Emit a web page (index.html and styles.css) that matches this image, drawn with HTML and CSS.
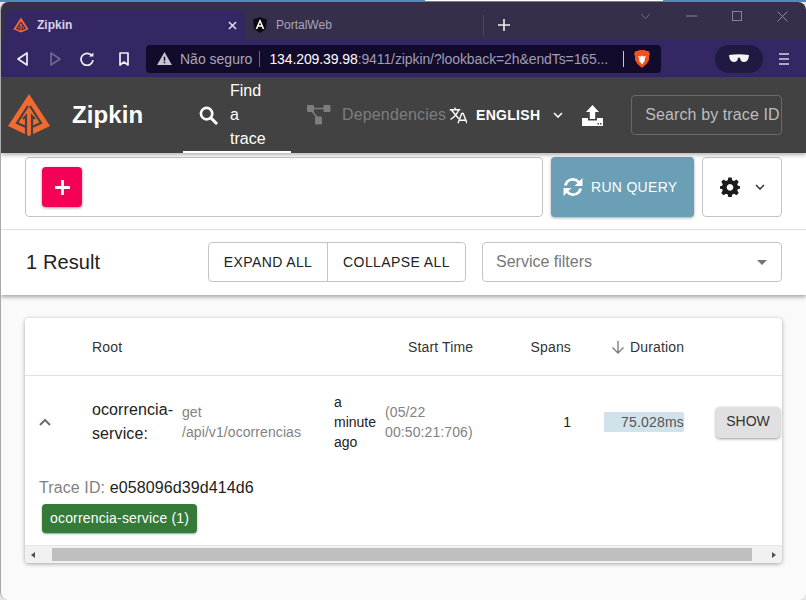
FILE: index.html
```html
<!DOCTYPE html>
<html lang="en">
<head>
<meta charset="UTF-8">
<meta name="viewport" content="width=device-width, initial-scale=1.0">
<title>Zipkin</title>
<link rel="stylesheet" href="styles.css">
</head>
<body>
<div class="desktop">
  <div class="desktop-top"><div class="other-window"></div></div>
  <div class="window">

    <div class="tabstrip">
      <div class="tab tab-active">
        <svg class="favicon" viewBox="0 0 42 42"><path d="M21 1 L41 32 L21 41 L1 32 Z" fill="#f26a30"/><path d="M21 13 L10 30 L18 33 V22 M21 13 L32 30 L24 33 V22" fill="none" stroke="#352763" stroke-width="3"/></svg>
        <span class="tab-title">Zipkin</span>
        <svg class="tab-close" viewBox="0 0 10 10"><path d="M1 1 L9 9 M9 1 L1 9" stroke="#e6e4ee" stroke-width="1.6"/></svg>
      </div>
      <div class="tab tab-other">
        <svg class="favicon" viewBox="0 0 16 16"><path d="M8 0 L15 2.6 L13.9 12 L8 16 L2.1 12 L1 2.6 Z" fill="#0c0c10"/><path d="M8 2 L12.4 12 H10.7 L9.8 9.7 H6.2 L5.3 12 H3.6 Z M8 5.4 L6.8 8.3 H9.2 Z" fill="#fff" fill-rule="evenodd"/></svg>
        <span class="tab-title tab-title-dim">PortalWeb</span>
      </div>
      <div class="tab-sep"></div>
      <svg class="new-tab" viewBox="0 0 12 12"><path d="M6 0 V12 M0 6 H12" stroke="#f0eff5" stroke-width="1.6"/></svg>
      <div class="win-controls">
        <svg viewBox="0 0 12 8" class="wc wc-chev"><path d="M1 1 L6 6.5 L11 1" fill="none" stroke="#77728c"/></svg>
        <svg viewBox="0 0 11 2" class="wc wc-min"><path d="M0 1 H11" stroke="#8d89a0"/></svg>
        <svg viewBox="0 0 11 11" class="wc wc-max"><rect x="0.5" y="0.5" width="10" height="10" fill="none" stroke="#8d89a0"/></svg>
        <svg viewBox="0 0 11 11" class="wc wc-x"><path d="M0.5 0.5 L10.5 10.5 M10.5 0.5 L0.5 10.5" stroke="#8d89a0"/></svg>
      </div>
    </div>

    <div class="toolbar">
      <svg class="nav-back" viewBox="0 0 11 14"><path d="M10 1 V13 L1 7 Z" fill="none" stroke="#f0eff5" stroke-width="1.7" stroke-linejoin="round"/></svg>
      <svg class="nav-forward" viewBox="0 0 11 14"><path d="M1 1 V13 L10 7 Z" fill="none" stroke="#6f6a8c" stroke-width="1.7" stroke-linejoin="round"/></svg>
      <svg class="nav-reload" viewBox="0 0 14 14"><path d="M12 4 A6 6 0 1 0 13 8" fill="none" stroke="#f0eff5" stroke-width="1.7"/><path d="M9 4.5 H13.4 V0.5 Z" fill="#f0eff5"/></svg>
      <svg class="nav-bookmark" viewBox="0 0 10 14"><path d="M1 1 H9 V13 L5 10 L1 13 Z" fill="none" stroke="#f0eff5" stroke-width="1.7" stroke-linejoin="round"/></svg>
      <div class="omnibox">
        <svg class="warn" viewBox="0 0 16 14"><path d="M8 0 L16 14 H0 Z" fill="#c6c4d0"/><path d="M7.2 5 H8.8 V9.5 H7.2 Z M7.2 10.5 H8.8 V12 H7.2 Z" fill="#120b2c"/></svg>
        <span class="insecure">Não seguro</span>
        <span class="omni-sep"></span>
        <span class="url"><b>134.209.39.98</b>:9411/zipkin/?lookback=2h&amp;endTs=165...</span>
        <span class="omni-sep omni-sep-light"></span>
        <svg class="brave" viewBox="0 0 16 18"><path d="M3.5 1 L5.5 0 H10.5 L12.5 1 L14.5 1 L16 4 L15 6 L15 10 L12.5 14 L8 18 L3.5 14 L1 10 L1 6 L0 4 L1.5 1 Z" fill="#f1501f"/><path d="M4 6 L6.5 6.5 L8 5.5 L9.5 6.5 L12 6 L10.5 9 L11 10.5 L8 14.5 L5 10.5 L5.5 9 Z" fill="#fff"/></svg>
      </div>
      <div class="incognito">
        <svg viewBox="0 0 20 9"><path d="M0 1 Q10 -0.5 20 1 L19.5 4 Q18.5 8 15 8 Q11.5 8 11 4 Q10 3 9 4 Q8.5 8 5 8 Q1.5 8 0.5 4 Z" fill="#f4f4f4"/></svg>
      </div>
      <svg class="menu-icon" viewBox="0 0 10 12"><path d="M0 1 H10 M0 6 H10 M0 11 H10" stroke="#d5d3e0" stroke-width="1.5"/></svg>
    </div>

    <header class="appbar">
      <svg class="logo" viewBox="0 0 42 42"><path d="M21 0 L42 32 L21 42 L0 32 Z" fill="#f26a30"/><path d="M20 12 L9 29 L18 33 V22 L15 25 M22 12 L33 29 L24 33 V22 L27 25 M18 33 V42 M24 33 V42" fill="none" stroke="#424242" stroke-width="2.2"/></svg>
      <span class="brand">Zipkin</span>
      <a class="navtab navtab-on">
        <svg viewBox="0 0 20 20"><circle cx="8" cy="8" r="6" fill="none" stroke="#fff" stroke-width="2.8"/><path d="M12.5 12.5 L19 19" stroke="#fff" stroke-width="3"/></svg>
        <span class="navtab-label">Find<br>a<br>trace</span>
      </a>
      <a class="navtab navtab-off">
        <svg viewBox="0 0 24 20"><rect x="0" y="0" width="7" height="7" rx="1" fill="#7d7d7d"/><rect x="16.500" y="0" width="7" height="7" rx="1" fill="#7d7d7d"/><rect x="8" y="11.500" width="7" height="8" rx="1" fill="#7d7d7d"/><path d="M7 3.500 H17 M5 6 L10 12.500" stroke="#7d7d7d" stroke-width="1.6" fill="none"/></svg>
        <span>Dependencies</span>
      </a>
      <svg class="translate" viewBox="0 0 24 24"><path d="M1 5 H15 M8 2 V5 M3 5 L13 17 M13 5 Q10 13 2 18" fill="none" stroke="#fff" stroke-width="1.8"/><path d="M12 23 L17 10 H19 L24 23 M14 19 H22" fill="none" stroke="#fff" stroke-width="1.8"/></svg>
      <span class="lang">ENGLISH</span>
      <svg class="lang-chev" viewBox="0 0 10 6"><path d="M1 1 L5 5 L9 1" fill="none" stroke="#fff" stroke-width="1.6"/></svg>
      <svg class="upload" viewBox="0 0 21 21"><path d="M10.5 0 L17 7 H13.2 V14 H7.8 V7 H4 Z" fill="#fff"/><path d="M0 13 H6 V15.5 H15 V13 H21 V21 H0 Z" fill="#fff"/><path d="M15.5 18 H17 V19.4 H15.5 Z M18 18 H19.5 V19.4 H18 Z" fill="#424242"/></svg>
      <div class="trace-search">Search by trace ID</div>
    </header>

    <main class="page">
      <section class="query-panel">
        <div class="query-row">
          <div class="criteria">
            <button class="add-btn"><svg viewBox="0 0 14 14"><path d="M7 0 V14 M0 7 H14" stroke="#fff" stroke-width="2.6"/></svg></button>
          </div>
          <button class="run-btn">
            <svg viewBox="0 0 20 20"><path d="M1 8.5 A9 9 0 0 1 16.5 4 L19.5 1 V9 H11.5 L14.6 6 A6 6 0 0 0 4 8.5 Z" fill="#fff"/><path d="M19 11.5 A9 9 0 0 1 3.5 16 L0.5 19 V11 H8.5 L5.4 14 A6 6 0 0 0 16 11.5 Z" fill="#fff"/></svg>
            RUN QUERY
          </button>
          <button class="settings-btn">
            <svg class="gear" viewBox="0 0 24 24"><path fill-rule="evenodd" d="M10 0.500 H14 L14.700 4 L16.900 4.900 L19.700 3 L22.500 5.800 L20.700 8.700 L21.500 10.500 L24 11 V14 L21.500 14.500 L20.700 16.300 L22.500 19.200 L19.700 22 L16.900 20.100 L14.700 21 L14 24 H10 L9.300 21 L7.100 20.100 L4.300 22 L1.500 19.200 L3.300 16.300 L2.500 14.500 L0 14 V11 L2.500 10.500 L3.300 8.700 L1.500 5.800 L4.300 3 L7.100 4.900 L9.300 4 Z M12 8.500 A4 4 0 1 0 12.010 8.500 Z" fill="#1a1a1a"/></svg>
            <svg class="small-chev" viewBox="0 0 10 6"><path d="M1 1 L5 5 L9 1" fill="none" stroke="#333" stroke-width="1.5"/></svg>
          </button>
        </div>
        <div class="results-row">
          <span class="result-count">1 Result</span>
          <div class="btn-group">
            <button>EXPAND ALL</button>
            <button>COLLAPSE ALL</button>
          </div>
          <div class="service-filter">
            <span>Service filters</span>
            <i class="caret"></i>
          </div>
        </div>
      </section>

      <section class="table-card">
        <div class="row row-head">
          <span class="col-toggle"></span>
          <span class="col-root">Root</span>
          <span class="col-start head-start">Start Time</span>
          <span class="col-spans">Spans</span>
          <span class="col-duration head-duration">
            <svg viewBox="0 0 14 14"><path d="M7 1 V13 M1.500 7.500 L7 13 L12.500 7.500" fill="none" stroke="#7d7d7d" stroke-width="1.400"/></svg>
            Duration
          </span>
        </div>
        <div class="row row-trace">
          <span class="col-toggle"><svg viewBox="0 0 12 8"><path d="M1 7 L6 2 L11 7" fill="none" stroke="#6e6e6e" stroke-width="2"/></svg></span>
          <span class="col-root root-cell">
            <span class="service-name">ocorrencia-service:</span>
            <span class="span-name">get /api/v1/ocorrencias</span>
          </span>
          <span class="col-start start-cell">
            <span class="ago">a minute ago</span>
            <span class="stamp">(05/22 00:50:21:706)</span>
          </span>
          <span class="col-spans">1</span>
          <span class="col-duration"><span class="duration-bar">75.028ms</span></span>
          <button class="show-btn">SHOW</button>
        </div>
        <div class="trace-detail">
          <div class="trace-id"><span>Trace ID:</span> e058096d39d414d6</div>
          <span class="service-chip">ocorrencia-service (1)</span>
        </div>
        <div class="hscroll">
          <i class="arrow arrow-left"></i>
          <div class="hscroll-track"><div class="hscroll-thumb"></div></div>
          <i class="arrow arrow-right"></i>
        </div>
      </section>
    </main>
  </div>
</div>
</body>
</html>
```

FILE: styles.css
```css
* {
    box-sizing: border-box;
}
html, body {
    margin: 0;
    padding: 0;
    height: 600px;
    overflow: hidden;
}
body {
    font-family: "Liberation Sans", Arial, sans-serif;
    background-color: #e6e6e6;
    color: #222;
}
button {
    font-family: inherit;
    cursor: pointer;
}
.desktop {
    height: 600px;
}
.desktop-top {
    height: 2px;
    background-color: #4a8bc4;
}
.other-window {
    width: 238px;
    height: 1px;
    margin-left: 425px;
    background-color: #fff;
}
.window {
    height: 598px;
    background-color: #fafafa;
    border-radius: 8px;
    border-left: 1px solid #a9a9a9;
    overflow: hidden;
    display: flex;
    flex-direction: column;
}

/* browser chrome */
.tabstrip {
    height: 38px;
    flex: none;
    background-color: #352f4b;
    display: flex;
    align-items: flex-end;
    padding-left: 4px;
}
.tab {
    height: 30px;
    display: flex;
    align-items: center;
    font-size: 12px;
}
.tab-active {
    width: 240px;
    padding: 0 8px;
    background-color: #352763;
    border-radius: 8px 8px 0 0;
    color: #e9e7f1;
}
.tab-other {
    width: 238px;
    padding-left: 7px;
}
.favicon {
    width: 16px;
    height: 16px;
    flex: none;
}
.tab-title {
    margin-left: 8px;
    flex: 1;
    font-weight: bold;
    color: #d8d5e6;
}
.tab-title-dim {
    font-weight: normal;
    color: #a9a5ba;
}
.tab-close {
    width: 9px;
    height: 9px;
}
.tab-sep {
    width: 1px;
    height: 22px;
    margin-bottom: 3px;
    background-color: #4b4566;
}
.new-tab {
    width: 12px;
    height: 12px;
    margin: 0 0 9px 14px;
}
.win-controls {
    margin-left: auto;
    align-self: flex-start;
    height: 30px;
    width: 170px;
    position: relative;
}
.wc {
    position: absolute;
}
.wc-chev {
    left: 4px;
    top: 11px;
    width: 11px;
    height: 7px;
}
.wc-min {
    left: 50px;
    top: 13px;
    width: 11px;
    height: 2px;
}
.wc-max {
    left: 96px;
    top: 9px;
    width: 10px;
    height: 10px;
}
.wc-x {
    left: 141px;
    top: 9px;
    width: 11px;
    height: 11px;
}
.toolbar {
    height: 37px;
    flex: none;
    background-color: #352763;
    display: flex;
    align-items: center;
    padding-left: 16px;
}
.toolbar > svg {
    flex: none;
}
.nav-back {
    width: 11px;
    height: 14px;
    margin-right: 22px;
}
.nav-forward {
    width: 11px;
    height: 14px;
    margin-right: 19px;
}
.nav-reload {
    width: 14px;
    height: 14px;
    margin-right: 25px;
}
.nav-bookmark {
    width: 10px;
    height: 14px;
    margin-right: 17px;
}
.omnibox {
    width: 515px;
    height: 28px;
    flex: none;
    background-color: #120b2c;
    border-radius: 4px;
    display: flex;
    align-items: center;
    padding-left: 11px;
    font-size: 13px;
    white-space: nowrap;
}
.warn {
    width: 15px;
    height: 13px;
    flex: none;
}
.insecure {
    margin-left: 8px;
    font-size: 14px;
    color: #a9a7b8;
}
.omni-sep {
    width: 1px;
    height: 16px;
    background-color: #6a6680;
    margin: 0 9px 0 7px;
    flex: none;
}
.omni-sep-light {
    background-color: #c9c7d4;
    margin: 0 10px 0 12px;
}
.url {
    width: 342px;
    flex: none;
    color: #a09db2;
    font-size: 14px;
    letter-spacing: -0.1px;
}
.url b {
    font-weight: normal;
    color: #fff;
}
.brave {
    width: 16px;
    height: 18px;
    flex: none;
}
.incognito {
    width: 48px;
    height: 28px;
    flex: none;
    margin-left: 54px;
    background-color: #201a42;
    border-radius: 14px;
    display: flex;
    align-items: center;
    justify-content: center;
}
.incognito svg {
    width: 20px;
    height: 9px;
}
.menu-icon {
    width: 10px;
    height: 12px;
    margin-left: 16px;
}

/* zipkin app bar */
.appbar {
    height: 76px;
    flex: none;
    background-color: #424242;
    color: #fff;
    display: flex;
    align-items: center;
    padding-left: 7px;
    position: relative;
    z-index: 2;
    box-shadow: 0 2px 4px rgba(0, 0, 0, 0.3);
}
.logo {
    width: 42px;
    height: 42px;
    flex: none;
}
.brand {
    font-size: 24px;
    font-weight: bold;
    margin-left: 22px;
    width: 111px;
    flex: none;
    letter-spacing: 0.1px;
}
.navtab {
    height: 76px;
    display: flex;
    align-items: center;
    font-size: 16px;
    line-height: 24px;
    flex: none;
}
.navtab svg {
    flex: none;
}
.navtab-on {
    width: 108px;
    padding-left: 16px;
    border-bottom: 2px solid #fff;
    padding-top: 2px;
}
.navtab-on svg {
    width: 19px;
    height: 19px;
}
.navtab-label {
    margin-left: 12px;
}
.navtab-off {
    width: 158px;
    padding-left: 16px;
    color: #7d7d7d;
    letter-spacing: 0.15px;
    white-space: nowrap;
}
.navtab-off svg {
    width: 24px;
    height: 20px;
    margin-right: 11px;
}
.translate {
    width: 18px;
    height: 18px;
    flex: none;
}
.lang {
    font-size: 14px;
    font-weight: bold;
    margin-left: 9px;
    letter-spacing: 0.3px;
    flex: none;
}
.lang-chev {
    width: 10px;
    height: 6px;
    margin-left: 13px;
    flex: none;
}
.upload {
    width: 21px;
    height: 21px;
    margin-left: 19px;
    flex: none;
}
.trace-search {
    width: 151px;
    height: 40px;
    flex: none;
    margin-left: 28px;
    border: 1px solid #6a6a6a;
    border-radius: 4px;
    padding-left: 13px;
    line-height: 37px;
    font-size: 16px;
    letter-spacing: 0.1px;
    color: #bdbdbd;
    white-space: nowrap;
    overflow: hidden;
}

/* query panel */
.page {
    flex: 1;
    min-height: 0;
    display: flex;
    flex-direction: column;
}
.query-panel {
    height: 142px;
    flex: none;
    background-color: #fff;
    box-shadow: 0 2px 4px rgba(0, 0, 0, 0.35);
    position: relative;
    z-index: 1;
}
.query-row {
    height: 77px;
    display: flex;
    padding: 4px 24px 0 24px;
    border-bottom: 1px solid #e2e2e2;
}
.criteria {
    width: 518px;
    height: 60px;
    border: 1px solid #c4c4c4;
    border-radius: 4px;
    padding: 9px 16px;
}
.add-btn {
    width: 40px;
    height: 40px;
    padding: 0;
    border: none;
    border-radius: 4px;
    background-color: #f50057;
    box-shadow: 0 1px 3px rgba(0, 0, 0, 0.4);
    display: flex;
    align-items: center;
    justify-content: center;
}
.add-btn svg {
    width: 15px;
    height: 15px;
}
.run-btn {
    width: 143px;
    height: 60px;
    margin-left: 8px;
    border: none;
    border-radius: 4px;
    background-color: #6a9fb5;
    box-shadow: 0 1px 3px rgba(0, 0, 0, 0.35);
    color: #fff;
    font-size: 14px;
    letter-spacing: 0.3px;
    display: flex;
    align-items: center;
    gap: 8px;
    padding: 0 0 0 12px;
    white-space: nowrap;
}
.run-btn svg {
    width: 20px;
    height: 20px;
}
.settings-btn {
    width: 80px;
    height: 60px;
    margin-left: 8px;
    background-color: #fff;
    border: 1px solid #c4c4c4;
    border-radius: 4px;
    display: flex;
    align-items: center;
    padding: 0 0 0 17px;
}
.gear {
    width: 20px;
    height: 20px;
}
.small-chev {
    width: 10px;
    height: 6px;
    margin-left: 15px;
}
.results-row {
    height: 64px;
    display: flex;
    align-items: center;
    padding: 0 24px 0 25px;
}
.result-count {
    font-size: 20px;
    width: 182px;
    flex: none;
    letter-spacing: 0.1px;
}
.btn-group {
    display: flex;
    width: 258px;
    height: 40px;
    flex: none;
    border: 1px solid #c4c4c4;
    border-radius: 4px;
}
.btn-group button {
    height: 38px;
    padding: 0;
    background: none;
    border: none;
    font-size: 14px;
    letter-spacing: 0.4px;
    color: #222;
    white-space: nowrap;
}
.btn-group button:first-child {
    width: 118px;
}
.btn-group button + button {
    width: 138px;
    border-left: 1px solid #c4c4c4;
}
.service-filter {
    width: 300px;
    height: 40px;
    flex: none;
    margin-left: 16px;
    border: 1px solid #c4c4c4;
    border-radius: 4px;
    display: flex;
    align-items: center;
    justify-content: space-between;
    padding: 0 14px 0 13px;
    font-size: 16px;
    color: #777;
}
.caret {
    width: 0;
    height: 0;
    border-left: 5px solid transparent;
    border-right: 5px solid transparent;
    border-top: 5px solid #757575;
}

/* trace table */
.table-card {
    width: 757px;
    margin: 23px 0 0 24px;
    height: 245px;
    flex: none;
    background-color: #fff;
    border-radius: 4px;
    box-shadow: 0 1px 4px rgba(0, 0, 0, 0.35);
    overflow: hidden;
    font-size: 14px;
    display: flex;
    flex-direction: column;
}
.row {
    display: flex;
    align-items: center;
}
.col-toggle {
    width: 67px;
    flex: none;
    display: flex;
    padding-left: 14px;
}
.col-toggle svg {
    width: 12px;
    height: 8px;
}
.col-root {
    width: 242px;
    flex: none;
}
.col-start {
    width: 150px;
    flex: none;
}
.col-spans {
    width: 87px;
    flex: none;
    text-align: right;
}
.col-duration {
    width: 113px;
    flex: none;
    padding-left: 33px;
}
.row-head {
    height: 58px;
    border-bottom: 1px solid #e0e0e0;
    color: #333;
    letter-spacing: 0.15px;
}
.head-start {
    padding-left: 74px;
    white-space: nowrap;
}
.head-duration {
    display: flex;
    align-items: center;
    padding-left: 40px;
    white-space: nowrap;
}
.head-duration svg {
    width: 14px;
    height: 14px;
    margin-right: 5px;
    flex: none;
}
.row-trace {
    height: 92px;
}
.root-cell {
    display: flex;
    align-items: center;
}
.service-name {
    width: 90px;
    font-size: 16px;
    line-height: 24px;
    letter-spacing: 0.1px;
    flex: none;
}
.span-name {
    width: 130px;
    color: #828282;
    line-height: 20px;
    letter-spacing: 0.08px;
}
.start-cell {
    display: flex;
    align-items: center;
}
.ago {
    width: 51px;
    flex: none;
    line-height: 20px;
}
.stamp {
    width: 99px;
    flex: none;
    color: #828282;
    line-height: 20px;
    letter-spacing: 0.1px;
}
.duration-bar {
    display: block;
    width: 80px;
    height: 20px;
    line-height: 20px;
    text-align: right;
    background-color: #d2e2ea;
    color: #555;
    letter-spacing: 0.2px;
    border-radius: 0 2px 2px 0;
}
.show-btn {
    width: 64px;
    height: 31px;
    margin: 0 0 0 32px;
    flex: none;
    border: none;
    border-radius: 4px;
    padding: 0 0 2px;
    background-color: #e0e0e0;
    box-shadow: 0 1px 3px rgba(0, 0, 0, 0.4);
    font-size: 14px;
    color: #333;
}
.trace-detail {
    flex: 1;
    padding: 8px 14px 0;
}
.trace-id {
    font-size: 16px;
    line-height: 24px;
    letter-spacing: 0.1px;
}
.trace-id span {
    color: #828282;
}
.service-chip {
    display: inline-block;
    margin: 4px 0 0 3px;
    height: 29px;
    line-height: 29px;
    padding: 0 8px;
    border-radius: 4px;
    background-color: #357a38;
    color: #fff;
    font-size: 14px;
    letter-spacing: 0.17px;
    box-shadow: 0 1px 2px rgba(0, 0, 0, 0.4);
}
.hscroll {
    height: 18px;
    flex: none;
    background-color: #f1f1f1;
    border-top: 1px solid #e4e4e4;
    display: flex;
    align-items: center;
}
.hscroll-track {
    flex: 1;
    height: 13px;
    margin: 0 17px;
}
.hscroll-thumb {
    width: 700px;
    height: 13px;
    background-color: #bfbfbf;
}
.arrow {
    width: 0;
    height: 0;
    border-top: 3.5px solid transparent;
    border-bottom: 3.5px solid transparent;
}
.arrow-left {
    margin-left: 6px;
    border-right: 4px solid #505050;
}
.arrow-right {
    margin-right: 6px;
    border-left: 4px solid #505050;
}
```
